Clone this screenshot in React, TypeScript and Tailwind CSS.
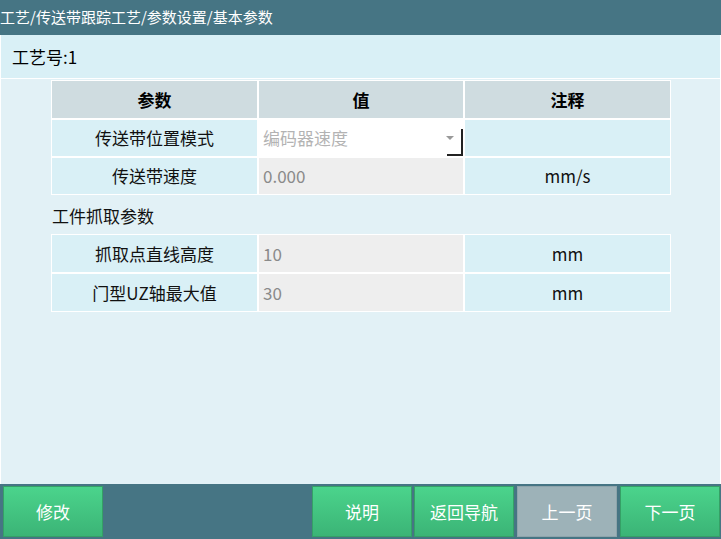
const font = { fontFamily: '"Microsoft YaHei", "Noto Sans CJK SC", "Noto Sans", sans-serif' };

const Cell = ({ children, tone = "label", tall = false }: { children?: React.ReactNode; tone?: "head" | "label" | "value" | "unit"; tall?: boolean }) => {
    const h = tall ? "h-[37px]" : "h-[36px]";
    if (tone === "head") {
        return <div className="h-[37px] bg-[#cfdce0] flex items-center justify-center font-bold text-black">{children}</div>;
    }
    if (tone === "value") {
        return <div className={`${h} bg-[#eeeeee] flex items-center pl-[4px] text-[#8a8a8a]`}>{children}</div>;
    }
    return <div className={`${h} bg-[#d9f0f6] flex items-center justify-center text-[#111]`}>{children}</div>;
};

const Btn = ({ label, disabled = false }: { label: string; disabled?: boolean }) => (
    <div className={`w-[100px] h-[51px] flex items-center justify-center text-white text-[17px] border ${disabled ? "bg-[#9db2b8] border-[#8ea4ab]" : "bg-gradient-to-b from-[#4bd48c] to-[#3bb476] border-[#35a066]"}`}>
        {label}
    </div>
);

export default function App() {
    return (
        <div className="w-[721px] h-[539px] flex flex-col bg-[#e2f1f6] overflow-hidden text-[17px]" style={font}>
            <div className="h-[35px] bg-[#467584] text-white text-[15px] flex items-center">
                工艺/传送带跟踪工艺/参数设置/基本参数
            </div>

            <div className="flex-1 flex flex-col border-l border-r border-white">
                <div className="h-[44px] bg-[#d9f0f6] border-b border-white flex items-center pl-[11px] text-[17px] text-black">
                    工艺号:1
                </div>

                <div className="ml-[50px] mt-[1px] w-[620px] bg-white p-[1px] grid grid-cols-[205px_204px_205px] gap-[2px]">
                    <Cell tone="head">参数</Cell>
                    <Cell tone="head">值</Cell>
                    <Cell tone="head">注释</Cell>

                    <Cell>传送带位置模式</Cell>
                    <div className="h-[36px] bg-white relative flex items-center pl-[4px] text-[#b3b3b3]">
                        编码器速度
                        <div className="absolute right-[9px] top-[16px] w-0 h-0 border-l-[4px] border-r-[4px] border-t-[4px] border-l-transparent border-r-transparent border-t-[#999]" />
                        <div className="absolute right-0 bottom-0 w-[16px] h-[27px] border-r-2 border-b-2 border-[#222]" />
                    </div>
                    <Cell tone="unit"></Cell>

                    <Cell>传送带速度</Cell>
                    <Cell tone="value">0.000</Cell>
                    <Cell tone="unit">mm/s</Cell>
                </div>

                <div className="ml-[51px] mt-[9px] h-[23px] flex items-center text-[#111]">工件抓取参数</div>

                <div className="ml-[50px] mt-[7px] w-[620px] bg-white p-[1px] grid grid-cols-[205px_204px_205px] gap-[2px]">
                    <Cell tall>抓取点直线高度</Cell>
                    <Cell tall tone="value">10</Cell>
                    <Cell tall tone="unit">mm</Cell>

                    <Cell tall>门型UZ轴最大值</Cell>
                    <Cell tall tone="value">30</Cell>
                    <Cell tall tone="unit">mm</Cell>
                </div>
            </div>

            <div className="h-[55px] bg-[#467584] flex items-start pt-[2px] pl-[3px] pr-[1px]">
                <Btn label="修改" />
                <div className="flex-1" />
                <div className="flex gap-[2px]">
                    <Btn label="说明" />
                    <Btn label="返回导航" />
                    <div className="ml-[1px]"><Btn label="上一页" disabled /></div>
                    <div className="ml-[1px]"><Btn label="下一页" /></div>
                </div>
            </div>
        </div>
    );
}
